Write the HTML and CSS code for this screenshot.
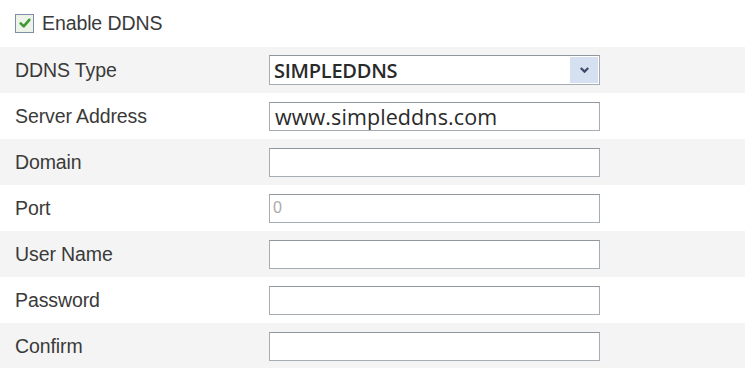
FILE: index.html
```html
<!DOCTYPE html>
<html>
<head>
<meta charset="utf-8">
<link rel="stylesheet" href="styles.css">
</head>
<body>
<div class="form">
  <div class="row top">
    <label class="check">
      <span class="box"><svg width="14" height="14" viewBox="0 0 12 12"><path d="M2.3 6.3 L4.9 8.8 L9.7 3.3" fill="none" stroke="#3f9a35" stroke-width="2.3" stroke-linecap="round" stroke-linejoin="round"/></svg></span>
      <span class="lbl">Enable DDNS</span>
    </label>
  </div>
  <div class="row alt">
    <span class="lbl">DDNS Type</span>
    <div class="field select"><span class="val bold">SIMPLEDDNS</span><span class="arrow"><svg width="11" height="8" viewBox="0 0 11 8"><path d="M1.8 2 L5.5 5.6 L9.2 2" fill="none" stroke="#3d4a66" stroke-width="2.2"/></svg></span></div>
  </div>
  <div class="row">
    <span class="lbl">Server Address</span>
    <div class="field"><span class="val big">www.simpleddns.com</span></div>
  </div>
  <div class="row alt">
    <span class="lbl">Domain</span>
    <div class="field"></div>
  </div>
  <div class="row">
    <span class="lbl">Port</span>
    <div class="field"><span class="val dim">0</span></div>
  </div>
  <div class="row alt">
    <span class="lbl">User Name</span>
    <div class="field"></div>
  </div>
  <div class="row">
    <span class="lbl">Password</span>
    <div class="field"></div>
  </div>
  <div class="row alt">
    <span class="lbl">Confirm</span>
    <div class="field"></div>
  </div>
</div>
</body>
</html>
```
FILE: styles.css
```css
html, body {
  margin: 0;
  padding: 0;
  background: #fff;
}
body {
  font-family: "Liberation Sans", Arial, sans-serif;
  color: #333;
  width: 748px;
  height: 368px;
  overflow: hidden;
}
.form {
  display: flex;
  flex-direction: column;
}
.row {
  height: 46px;
  flex: none;
  display: flex;
  align-items: center;
  padding-left: 15px;
  box-sizing: border-box;
}
.row.alt {
  background: #f4f4f4;
  margin-right: 3px;
}
.row.top {
  height: 47px;
  padding-left: 15px;
  padding-bottom: 1px;
}
.lbl {
  font-size: 19.5px;
  color: #3a3a3a;
  width: 253px;
  flex: none;
  letter-spacing: -0.1px;
}
.check {
  display: flex;
  align-items: center;
}
.check .lbl {
  width: auto;
  margin-left: 8px;
  font-size: 19.5px;
}
.box {
  width: 17px;
  height: 17px;
  border: 1px solid #7d8fa8;
  background: #eef3ea;
  display: flex;
  align-items: center;
  justify-content: center;
}
.field {
  width: 331px;
  height: 29px;
  margin-left: 1px;
  box-sizing: border-box;
  border: 1px solid #a6acb4;
  border-top-color: #8f969e;
  background: #fff;
  display: flex;
  align-items: center;
  padding-left: 4px;
}
.val {
  color: #222;
}
.val.bold {
  font-family: "Open Sans", sans-serif;
  font-size: 20px;
  font-weight: 600;
  color: #2a2a2a;
  letter-spacing: -0.25px;
}
.val.big {
  font-family: "Open Sans", sans-serif;
  font-size: 21.5px;
  color: #2a2a2a;
  letter-spacing: 0.1px;
  margin-left: 1px;
}
.val.dim {
  font-size: 16px;
  color: #aaa;
  margin-left: -1px;
}
.select {
  height: 30px;
  padding-right: 0;
}
.arrow {
  margin-left: auto;
  width: 28px;
  height: 26px;
  margin-right: 1px;
  background: #d5e0f1;
  display: flex;
  align-items: center;
  justify-content: center;
}
```
